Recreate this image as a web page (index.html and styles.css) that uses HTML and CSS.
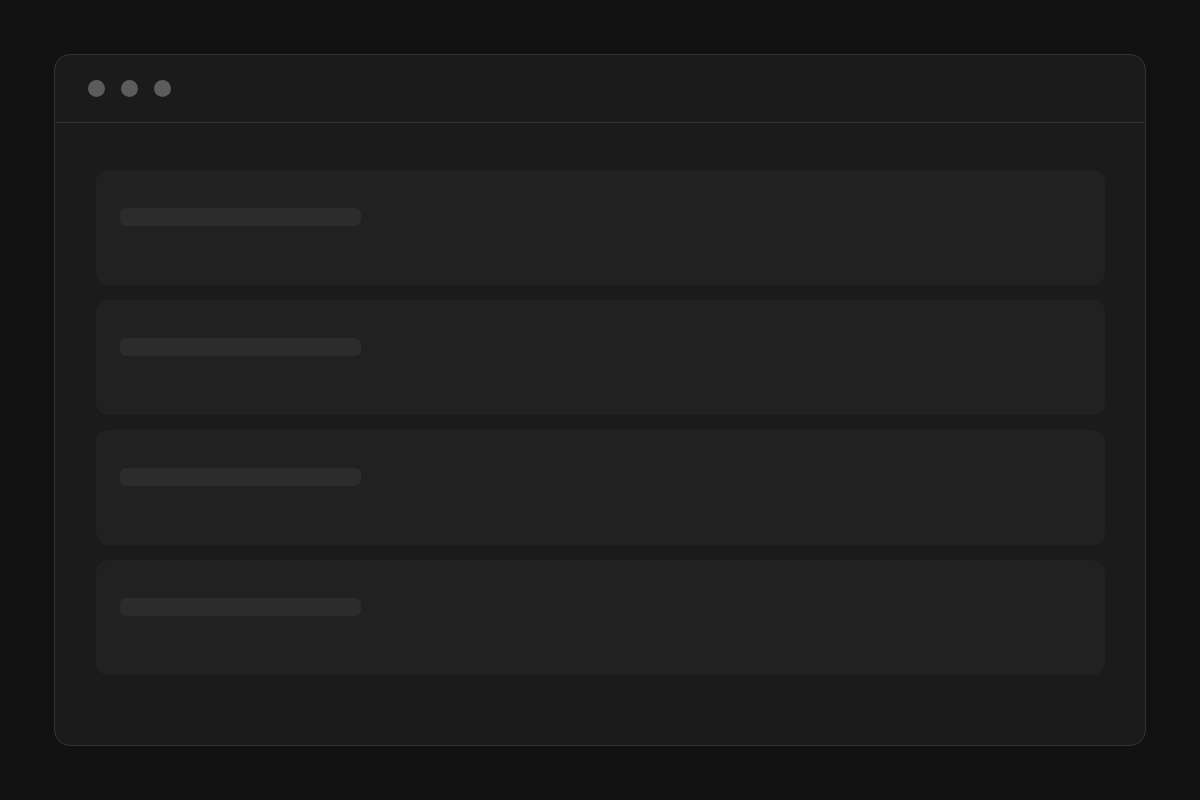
FILE: index.html
```html
<!DOCTYPE html>
<html>
<head>
<meta charset="utf-8">
<link rel="stylesheet" href="styles.css">
</head>
<body>
<div class="window">
  <div class="titlebar">
    <span class="dot"></span>
    <span class="dot"></span>
    <span class="dot"></span>
  </div>
  <div class="content">
    <div class="card"><div class="bar"></div></div>
    <div class="card"><div class="bar"></div></div>
    <div class="card"><div class="bar"></div></div>
    <div class="card"><div class="bar"></div></div>
  </div>
</div>
</body>
</html>
```
FILE: styles.css
```css
html, body {
  margin: 0;
  padding: 0;
  background: #111111;
  font-family: "Liberation Sans", Arial, sans-serif;
}
body {
  padding: 54px;
  height: 800px;
  box-sizing: border-box;
}
.window {
  width: 1092px;
  height: 692px;
  box-sizing: border-box;
  border: 1px solid #333333;
  border-radius: 16px;
  background: #1b1b1b;
  overflow: hidden;
}
.titlebar {
  height: 68px;
  box-sizing: border-box;
  border-bottom: 1px solid #333333;
  display: flex;
  align-items: center;
  gap: 16px;
  padding-left: 33px;
}
.dot {
  width: 17px;
  height: 17px;
  border-radius: 50%;
  background: #5c5c5c;
}
.content {
  padding: 47px 40px 0 41px;
  display: flex;
  flex-direction: column;
  gap: 15px;
}
.card {
  height: 115px;
  box-sizing: border-box;
  padding: 38px 24px;
  border-radius: 12px;
  background: #212121;
}
.bar {
  width: 241px;
  height: 18px;
  border-radius: 6px;
  background: #2c2c2c;
}
```
